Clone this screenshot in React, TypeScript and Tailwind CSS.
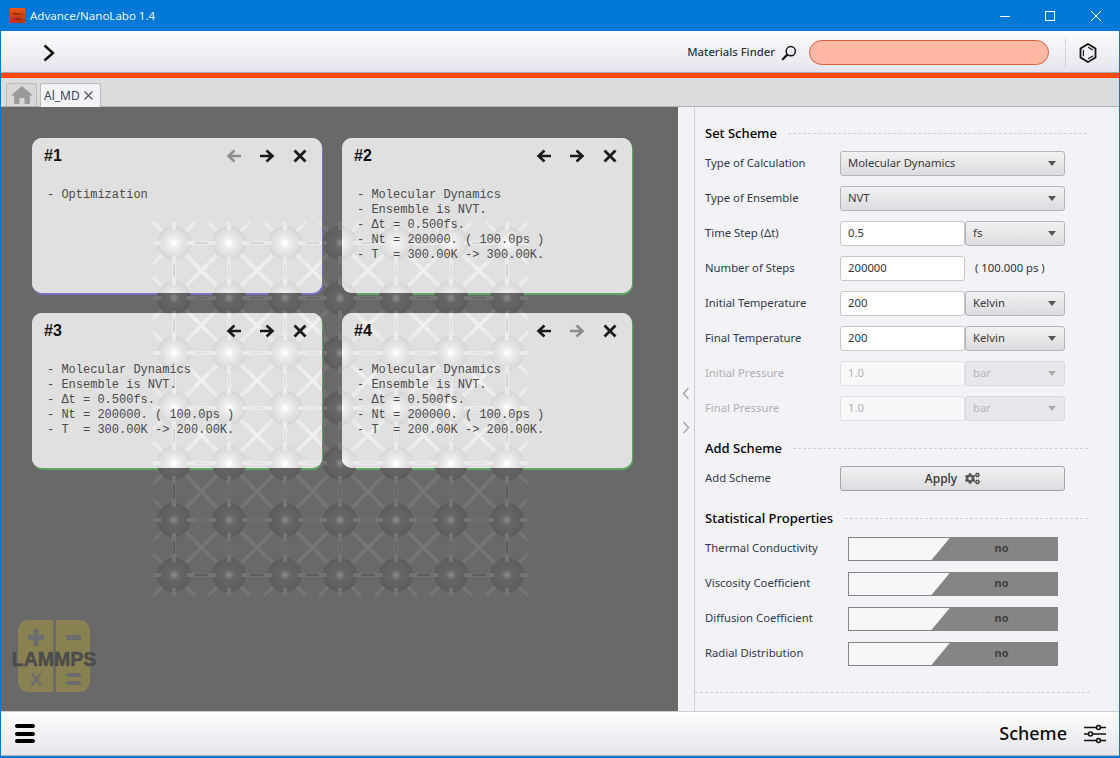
import { FaCogs } from 'react-icons/fa';

const cols = [174, 229, 285, 340, 396, 451, 507];
const rows = [243, 298, 353, 408, 463, 520, 575];

const cards = [
  {
    id: '#1',
    accent: 'shadow-[1px_2px_1px_#7673c4]',
    leftOff: true,
    rightOff: false,
    lines: ['- Optimization'],
  },
  {
    id: '#2',
    accent: 'shadow-[1px_2px_1px_#5fa863]',
    leftOff: false,
    rightOff: false,
    lines: ['- Molecular Dynamics', '- Ensemble is NVT.', '- Δt = 0.500fs.', '- Nt = 200000. ( 100.0ps )', '- T  = 300.00K -> 300.00K.'],
  },
  {
    id: '#3',
    accent: 'shadow-[1px_2px_1px_#5fa863]',
    leftOff: false,
    rightOff: false,
    lines: ['- Molecular Dynamics', '- Ensemble is NVT.', '- Δt = 0.500fs.', '- Nt = 200000. ( 100.0ps )', '- T  = 300.00K -> 200.00K.'],
  },
  {
    id: '#4',
    accent: 'shadow-[1px_2px_1px_#5fa863]',
    leftOff: false,
    rightOff: true,
    lines: ['- Molecular Dynamics', '- Ensemble is NVT.', '- Δt = 0.500fs.', '- Nt = 200000. ( 100.0ps )', '- T  = 200.00K -> 200.00K.'],
  },
];

const scheme = [
  { label: 'Type of Calculation', select: 'Molecular Dynamics' },
  { label: 'Type of Ensemble', select: 'NVT' },
  { label: 'Time Step (Δt)', input: '0.5', unit: 'fs' },
  { label: 'Number of Steps', input: '200000', note: '( 100.000 ps )' },
  { label: 'Initial Temperature', input: '200', unit: 'Kelvin' },
  { label: 'Final Temperature', input: '200', unit: 'Kelvin' },
  { label: 'Initial Pressure', input: '1.0', unit: 'bar', disabled: true },
  { label: 'Final Pressure', input: '1.0', unit: 'bar', disabled: true },
];

const stats = ['Thermal Conductivity', 'Viscosity Coefficient', 'Diffusion Coefficient', 'Radial Distribution'];

type LatticeColors = { id: string; diag: string; rail: string; railCore: string; stub: string; edge: string; dot: string; mid: string; rim: string };

function Lattice({ id, diag, rail, railCore, stub, edge, dot, mid, rim }: LatticeColors) {
  const bx = cols[cols.length - 1];
  const by = rows[rows.length - 1];
  return (
    <g>
      <defs>
        <radialGradient id={id}>
          <stop offset="0" stopColor={dot} />
          <stop offset="0.08" stopColor={dot} />
          <stop offset="0.3" stopColor={mid} />
          <stop offset="1" stopColor={rim} />
        </radialGradient>
      </defs>
      {rows.slice(0, -1).map((y, r) =>
        cols.slice(0, -1).map((x, c) => (
          <g key={`${r}-${c}`} stroke={diag} strokeWidth="3.5">
            <line x1={x} y1={y} x2={cols[c + 1]} y2={rows[r + 1]} />
            <line x1={cols[c + 1]} y1={y} x2={x} y2={rows[r + 1]} />
          </g>
        )),
      )}
      {rows.map((y) => (
        <g key={y}>
          <line x1={cols[0]} y1={y} x2={bx} y2={y} stroke={rail} strokeWidth="4" />
          <line x1={cols[0]} y1={y} x2={bx} y2={y} stroke={railCore} strokeWidth="1.5" />
        </g>
      ))}
      {cols.map((x) => (
        <g key={x}>
          <line x1={x} y1={rows[0]} x2={x} y2={by} stroke={rail} strokeWidth="4" />
          <line x1={x} y1={rows[0]} x2={x} y2={by} stroke={railCore} strokeWidth="1.5" />
        </g>
      ))}
      <path d={`M${cols[0]} ${rows[0]}H${bx}V${by}H${cols[0]}Z`} fill="none" stroke={edge} strokeWidth="1" />
      {rows.map((y) =>
        cols.map((x) => (
          <g key={`${x}-${y}`}>
            <g stroke={stub} strokeWidth="3.5">
              <line x1={x - 21} y1={y - 21} x2={x + 21} y2={y + 21} />
              <line x1={x + 21} y1={y - 21} x2={x - 21} y2={y + 21} />
            </g>
            <circle cx={x} cy={y} r="17" fill={`url(#${id})`} />
            <g stroke={stub} strokeWidth="4">
              <line x1={x - 21} y1={y} x2={x - 13} y2={y} />
              <line x1={x + 13} y1={y} x2={x + 21} y2={y} />
              <line x1={x} y1={y - 21} x2={x} y2={y - 13} />
              <line x1={x} y1={y + 13} x2={x} y2={y + 21} />
            </g>
          </g>
        )),
      )}
    </g>
  );
}

function LatticeLayer() {
  return (
    <svg className="absolute left-0 top-0 z-[1] pointer-events-none" width="678" height="604" viewBox="1 107 678 604">
      <defs>
        <clipPath id="card-shapes">
          <rect x="32" y="138" width="290" height="155" rx="10" />
          <rect x="342" y="138" width="290" height="155" rx="10" />
          <rect x="32" y="313" width="290" height="155" rx="10" />
          <rect x="342" y="313" width="290" height="155" rx="10" />
        </clipPath>
      </defs>
      <Lattice id="atom-dark" diag="#777675" rail="#727170" railCore="#666666" stub="#757473" edge="#525252" dot="#858483" mid="#686665" rim="#5d5c5b" />
      <g clipPath="url(#card-shapes)">
        <rect x="1" y="107" width="678" height="604" fill="#e0e0e0" />
        <Lattice id="atom-light" diag="#f0f0f0" rail="#ececec" railCore="#dedede" stub="#ebebeb" edge="#c8c8c8" dot="#ffffff" mid="#efeeee" rim="#d6d6d6" />
      </g>
    </svg>
  );
}

function LammpsLogo() {
  return (
    <svg className="absolute left-[11px] top-[512px]" width="88" height="76" viewBox="0 0 88 76">
      <rect x="6" y="1" width="72" height="72" rx="10" fill="#8a8152" />
      <rect x="41" y="0" width="3" height="74" fill="#696969" />
      <g fill="#6d6d6d">
        <rect x="16" y="16" width="16" height="5" />
        <rect x="21.5" y="10" width="5" height="17" />
        <rect x="54" y="16" width="15" height="5" />
        <rect x="54" y="54" width="15" height="4" />
        <rect x="54" y="62" width="15" height="4" />
      </g>
      <text x="24" y="67" textAnchor="middle" fontFamily="'Liberation Sans', sans-serif" fontWeight="700" fontSize="19" fill="#6d6d6d">X</text>
      <text x="42" y="47" textAnchor="middle" fontFamily="'Liberation Sans', sans-serif" fontWeight="700" fontSize="19.500" stroke="#4c4c4c" strokeWidth="0.5" fill="#4c4c4c">LAMMPS</text>
    </svg>
  );
}

function ArrowIcon({ dir, off }: { dir: 'left' | 'right'; off: boolean }) {
  return (
    <svg width="16" height="14" viewBox="0 0 16 14" fill="none" stroke={off ? '#8c8c8c' : '#1a1a1a'} strokeWidth="2.6">
      {dir === 'left' ? <path d="M8.5 1.5 2.5 7l6 5.5M3 7h12" /> : <path d="M7.5 1.5l6 5.5-6 5.5M13 7H1" />}
    </svg>
  );
}

function CloseIcon() {
  return (
    <svg width="14" height="14" viewBox="0 0 14 14" fill="none" stroke="#1a1a1a" strokeWidth="2.8">
      <path d="M1.5 1.5l11 11M12.5 1.5l-11 11" />
    </svg>
  );
}

function Caret({ off }: { off?: boolean }) {
  return <span className={`w-0 h-0 border-x-[4.5px] border-x-transparent border-t-[5px] ${off ? 'border-t-[#aaaaaa]' : 'border-t-[#555555]'}`} />;
}

function Select({ value, width, off }: { value: string; width: string; off?: boolean }) {
  return (
    <div className={`${width} h-[25px] flex items-center justify-between pl-[7px] pr-[8px] rounded-[3px] border ${off ? 'border-[#d8d8dc] bg-[#e8e8ec] text-[#b4b4b8]' : 'border-[#b4b4b8] bg-gradient-to-b from-[#f2f2f4] to-[#dcdce0] text-[#3a3a3a]'}`}>
      <span>{value}</span>
      <Caret off={off} />
    </div>
  );
}

function Heading({ title, lineClass }: { title: string; lineClass: string }) {
  return (
    <div className="h-6 flex items-center">
      <span className="text-[13px] font-medium text-black">{title}</span>
      <div className={`border-t border-dashed border-[#cfcfd4] -mt-[2px] ${lineClass}`} />
    </div>
  );
}

export default function App() {
  return (
    <div className="w-[1120px] h-[758px] flex flex-col overflow-hidden bg-[#0078d7] px-px pb-[2px] text-[11.300px] font-['Noto_Sans','Open_Sans',sans-serif]">
      {/* title bar */}
      <div className="h-[31px] -mx-px flex items-center text-white shrink-0">
        <div className="ml-[10px] w-[15px] h-[15px] bg-gradient-to-b from-[#e9551c] to-[#b8330a] flex items-center justify-center text-[4px] leading-[5px] text-[#3a1205] text-center">
          Nano<br />Labo
        </div>
        <span className="ml-[5px] text-[11.500px] text-[#eef6fc]">Advance/NanoLabo 1.4</span>
        <div className="ml-auto flex items-center">
          <svg className="mr-[35px]" width="10" height="10" viewBox="0 0 10 10" stroke="white" fill="none"><path d="M0 5.5h10" /></svg>
          <svg className="mr-[36px]" width="10" height="10" viewBox="0 0 10 10" stroke="white" fill="none"><rect x="0.5" y="0.5" width="9" height="9" /></svg>
          <svg className="mr-[19px]" width="10" height="10" viewBox="0 0 10 10" stroke="white" fill="none"><path d="M0 0l10 10M10 0L0 10" /></svg>
        </div>
      </div>

      {/* toolbar */}
      <div className="h-[42px] shrink-0 flex items-center pt-[2px] bg-gradient-to-b from-[#fdfdfe] to-[#e5e5ed] border-b border-[#a8a8a8]">
        <svg className="ml-[41px]" width="14" height="18" viewBox="0 0 14 18" fill="none" stroke="#0a0a0a" strokeWidth="2.4"><path d="M2.5 1.5 11 9l-8.5 7.5" /></svg>
        <span className="ml-auto text-[11.300px] font-medium text-[#2c3440]">Materials Finder</span>
        <svg className="ml-[6px]" width="16" height="16" viewBox="0 0 16 16" fill="none" stroke="#111111" strokeWidth="1.5">
          <circle cx="9.8" cy="6.2" r="4.6" />
          <path d="M6.4 9.6 1.2 14.8" strokeWidth="2.2" />
        </svg>
        <div className="ml-3 w-[240px] h-[25px] rounded-full bg-[#ffb8a4] border border-[#d9623c]" />
        <div className="ml-[16px] h-[29px] border-l border-dotted border-[#b4b4b8]" />
        <svg className="ml-[13px] mr-[22px]" width="18" height="20" viewBox="0 0 18 20" fill="none" stroke="#111111" strokeWidth="1.8">
          <path d="M9 1l7.5 4.4v9.2L9 19l-7.5-4.4V5.4z" />
          <path d="M4.4 6.8v6.400M9 4.200l5 2.800M9 15.800l5-2.800" strokeWidth="1.100" />
        </svg>
      </div>
      <div className="h-[5px] shrink-0 bg-[#ff4a0a]" />

      {/* tabs */}
      <div className="h-[29px] shrink-0 flex items-end pl-[5px] gap-[3px] bg-[#dcdcde] border-b border-[#b2b2b2]">
        <div className="w-[31px] h-[23px] flex items-center justify-center bg-[#d8d8da] border border-b-0 border-[#bcbcbc] rounded-t-[3px]">
          <svg width="22" height="18" viewBox="0 0 22 18" fill="#9a9a9a">
            <path d="M11 0 22 9.5h-3.2V18H13.5v-6h-5v6H3.200V9.500H0z" />
          </svg>
        </div>
        <div className="w-[61px] h-[24px] -mb-px flex items-center pl-[3px] bg-[#f4f4f8] border border-b-0 border-[#bcbcbc] rounded-t-[3px] text-[12px] text-[#3a4656]">
          <span>Al_MD</span>
          <svg className="ml-[4px]" width="9" height="9" viewBox="0 0 9 9" stroke="#555555" strokeWidth="1.2" fill="none"><path d="M.5.5l8 8M8.500.5l-8 8" /></svg>
        </div>
      </div>

      {/* body */}
      <div className="flex-1 flex min-h-0 bg-[#f2f2f7]">
        <div className="relative w-[677px] bg-[#696969] pl-[31px] pt-[31px]">
          <LatticeLayer />
          <LammpsLogo />
          <div className="grid grid-cols-[290px_290px] auto-rows-[155px] gap-5">
            {cards.map((card) => (
              <div key={card.id} className={`rounded-[10px] bg-[#e0e0e0] ${card.accent}`}>
                <div className="relative z-[2] pl-3 pr-[15px] pt-[10px]">
                  <div className="h-4 flex items-center font-['Liberation_Sans',sans-serif] font-bold text-[16px] text-[#111111]">
                    <span>{card.id}</span>
                    <div className="ml-auto -mt-px flex items-center">
                      <ArrowIcon dir="left" off={card.leftOff} />
                      <span className="ml-[17px]"><ArrowIcon dir="right" off={card.rightOff} /></span>
                      <span className="ml-[18px]"><CloseIcon /></span>
                    </div>
                  </div>
                  <pre className="mt-6 pl-[3px] font-['Liberation_Mono',monospace] text-[12px] leading-[15px] text-[#4a4a4a]">
                    {card.lines.join('\n')}
                  </pre>
                </div>
              </div>
            ))}
          </div>
        </div>

        {/* splitter */}
        <div className="w-[17px] flex flex-col items-center pt-[280px] gap-[21px] border-r border-[#cfcfd2]">
          <svg width="8" height="13" viewBox="0 0 8 13" fill="none" stroke="#a8a8ac" strokeWidth="1.5"><path d="M6.500 1 1.500 6.500l5 5.500" /></svg>
          <svg width="8" height="13" viewBox="0 0 8 13" fill="none" stroke="#a8a8ac" strokeWidth="1.5"><path d="M1.500 1l5 5.500-5 5.500" /></svg>
        </div>

        {/* settings panel */}
        <div className="flex-1 pl-[10px] pt-[15px] text-[#2e3a48]">
          <Heading title="Set Scheme" lineClass="ml-[11px] w-[299px]" />
          <div>
            {scheme.map((row) => (
              <div key={row.label} className={`h-[35px] flex items-center ${row.disabled ? 'text-[#b0b0b4]' : ''}`}>
                <span className="w-[135px]">{row.label}</span>
                {row.select ? (
                  <Select value={row.select} width="w-[225px]" />
                ) : (
                  <>
                    <div className={`w-[125px] h-[25px] flex items-center pl-[7px] rounded-[3px] border ${row.disabled ? 'bg-[#f8f8fa] border-[#e2e2e6]' : 'bg-white border-[#c8c8cc] text-[#333333]'}`}>
                      {row.input}
                    </div>
                    {row.unit ? <Select value={row.unit} width="w-[100px]" off={row.disabled} /> : <span className="ml-[10px] text-[#333333]">{row.note}</span>}
                  </>
                )}
              </div>
            ))}
          </div>

          <div className="mt-[11px]">
            <Heading title="Add Scheme" lineClass="ml-[11px] w-[295px]" />
          </div>
          <div className="h-[35px] flex items-center">
            <span className="w-[135px]">Add Scheme</span>
            <div className="w-[225px] h-[25px] flex items-center justify-center gap-2 rounded-[3px] border border-[#a4a4a8] bg-gradient-to-b from-[#f2f2f4] to-[#dcdce0] text-[12px] text-[#333333] font-medium">
              <span>Apply</span>
              <FaCogs size={15} color="#555555" />
            </div>
          </div>

          <div className="mt-[11px]">
            <Heading title="Statistical Properties" lineClass="ml-[12px] w-[243px]" />
          </div>
          {stats.map((name) => (
            <div key={name} className="h-[35px] flex items-center">
              <span className="w-[143px]">{name}</span>
              <div className="w-[210px] h-[24px] flex justify-end bg-white/40 border border-[#858585]">
                <div className="w-[127px] -my-px -mr-px flex items-center justify-center pl-[14px] pb-px bg-[#858585] [clip-path:polygon(20px_0,100%_0,100%_100%,0_100%)] text-[11px] font-bold text-[#3f3f3f]">
                  no
                </div>
              </div>
            </div>
          ))}
          <div className="mt-[21px] -ml-[10px] w-[395px] border-t border-dashed border-[#cfcfd4]" />
        </div>
      </div>

      {/* footer */}
      <div className="h-[45px] shrink-0 flex items-center bg-gradient-to-b from-[#fdfdfe] to-[#e6e6ec] border-t border-b border-t-[#cfcfd2] border-b-[#b4b4b8]">
        <div className="ml-[14px] w-5 flex flex-col gap-[3.500px]">
          <div className="h-1 rounded-full bg-black" />
          <div className="h-1 rounded-full bg-black" />
          <div className="h-1 rounded-full bg-black" />
        </div>
        <span className="ml-auto text-[18px] font-medium text-[#0c0c0c]">Scheme</span>
        <svg className="ml-[17px] mr-[13px]" width="22" height="20" viewBox="0 0 22 20" fill="none" stroke="#111111" strokeWidth="1.600">
          <path d="M0 3.500h12M17 3.500h5M0 10h4M9 10h13M0 16.500h12M17 16.500h5" />
          <circle cx="14.500" cy="3.500" r="2" />
          <circle cx="6.500" cy="10" r="2" />
          <circle cx="14.500" cy="16.500" r="2" />
        </svg>
      </div>
    </div>
  );
}
